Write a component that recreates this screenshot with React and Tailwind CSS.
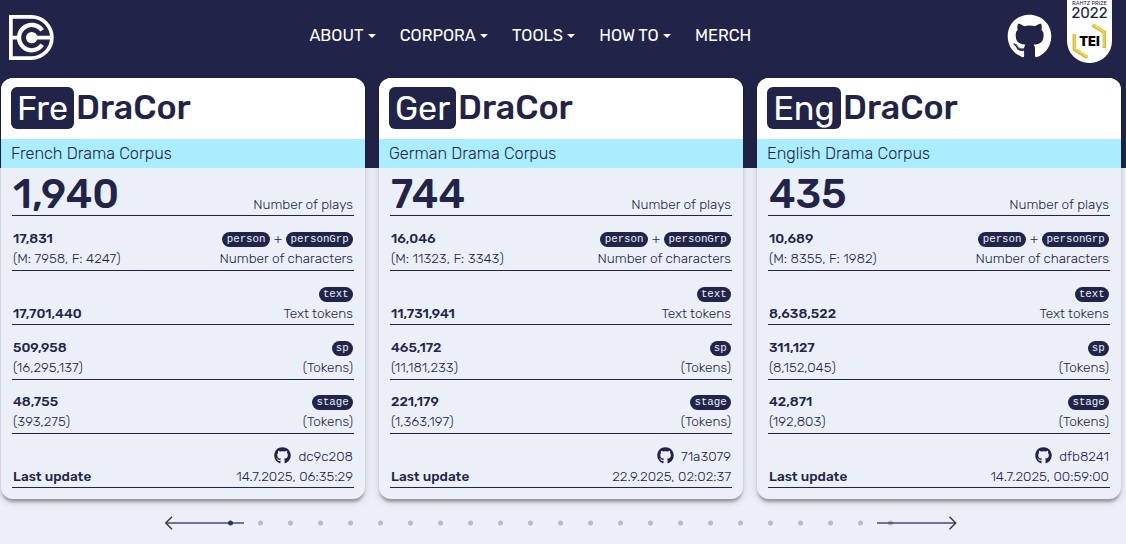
import { FaGithub } from "react-icons/fa";

const cards = [
  { id: "Fre", name: "French", plays: "1,940", chars: "17,831", mf: "(M: 7958, F: 4247)", text: "17,701,440", sp: "509,958", spt: "(16,295,137)", st: "48,755", stt: "(393,275)", sha: "dc9c208", date: "14.7.2025, 06:35:29", box: "w-[63px]" },
  { id: "Ger", name: "German", plays: "744", chars: "16,046", mf: "(M: 11323, F: 3343)", text: "11,731,941", sp: "465,172", spt: "(11,181,233)", st: "221,179", stt: "(1,363,197)", sha: "71a3079", date: "22.9.2025, 02:02:37", box: "w-[67px]" },
  { id: "Eng", name: "English", plays: "435", chars: "10,689", mf: "(M: 8355, F: 1982)", text: "8,638,522", sp: "311,127", spt: "(8,152,045)", st: "42,871", stt: "(192,803)", sha: "dfb8241", date: "14.7.2025, 00:59:00", box: "w-[74px]" },
];

function Logo() {
  return (
    <svg className="h-[46px] w-[46px]" viewBox="0 0 46 46" fill="none" stroke="#fff" strokeWidth="3.7">
      <path d="M1.9 1.9H22.3A20.6 20.6 0 0 1 22.3 43.1H1.9Z" />
      <path d="M33.2 15.4A12.7 12.7 0 1 0 33.2 29.8" strokeWidth="4.3" />
      <path d="M0 22.6H10M22.7 22.6H44" />
      <circle cx="22.7" cy="22.6" r="5.7" fill="#fff" stroke="none" />
    </svg>
  );
}

function Badge() {
  return (
    <div className="relative flex h-[63px] w-[45px] flex-col items-center overflow-hidden rounded-b-[22px] bg-white text-[#212448]">
      <span className="mt-[-1px] text-[5.6px] leading-[8px] whitespace-nowrap">RAHTZ PRIZE</span>
      <span className="text-[15px] leading-[13px]">2022</span>
      <svg className="absolute top-0 left-0 h-[63px] w-[45px]" viewBox="0 0 45 63" fill="none" strokeWidth="3.4" strokeLinejoin="round">
        <path d="M25.5 25L37.3 32.3V48M7.3 34V49.5L20.5 57.5" stroke="#d9b52c" />
        <path d="M25.5 24.6L37 31.8V47M7.6 34V49L20.5 56.8" stroke="#f0da5c" strokeWidth="1.4" />
      </svg>
      <span className="absolute top-[34px] font-[Inter,sans-serif] text-[12.8px] leading-4 font-black text-black">TEI</span>
    </div>
  );
}

function Row({ top, bottom, right, rightBottom }) {
  return (
    <div className="flex h-[54.4px] items-end justify-between border-b border-[#212448] px-px pb-[1.5px] text-[13.6px] leading-5">
      <div>
        <div className="font-medium">{top}</div>
        {bottom && <div className="font-light">{bottom}</div>}
      </div>
      <div className="flex flex-col items-end font-light">
        <div className="flex h-5 items-center gap-1">{right}</div>
        <div>{rightBottom}</div>
      </div>
    </div>
  );
}

function Tag({ children }) {
  return <span className="mt-[3px] h-[15px] rounded-full bg-[#212448] px-[4.2px] font-['Liberation_Mono',monospace] text-[10.8px] leading-[14px] font-normal text-[#ebeff7]">{children}</span>;
}

function Card({ c }) {
  return (
    <article className="h-[421px] w-[364px] shrink-0 overflow-hidden rounded-[12px] bg-[#ebeff7] shadow-[0_4px_3px_-1px_rgba(0,0,0,0.3),0_2px_10px_rgba(0,0,0,0.15)]">
      <div className="flex h-[61px] items-start bg-white pt-[9px] pl-[10px] text-[34px]">
        <span className={`${c.box} h-[42px] rounded-[6px] bg-[#212448] text-center leading-[43px] font-normal text-white`}>{c.id}</span>
        <span className="ml-[2px] leading-[41px] font-medium">DraCor</span>
      </div>
      <div className="h-[29px] bg-[#a9edff] px-[10px] text-[16.32px] leading-[29px] font-light">{c.name} Drama Corpus</div>
      <div className="mr-[11px] ml-[11px]">
        <div className="flex h-[48.4px] items-end justify-between border-b border-[#212448] px-px">
          <span className="text-[40.8px] leading-[42px] font-medium">{c.plays}</span>
          <span className="text-[13.6px] leading-[21px] font-light">Number of plays</span>
        </div>
        <Row top={c.chars} bottom={c.mf} right={<><Tag>person</Tag>+<Tag>personGrp</Tag></>} rightBottom="Number of characters" />
        <Row top={c.text} right={<Tag>text</Tag>} rightBottom="Text tokens" />
        <Row top={c.sp} bottom={c.spt} right={<Tag>sp</Tag>} rightBottom="(Tokens)" />
        <Row top={c.st} bottom={c.stt} right={<Tag>stage</Tag>} rightBottom="(Tokens)" />
        <Row top="Last update" right={<><FaGithub className="mr-[3px] h-[17px] w-[17px]" />{c.sha}</>} rightBottom={c.date} />
      </div>
    </article>
  );
}

const nav = ["ABOUT", "CORPORA", "TOOLS", "HOW TO", "MERCH"];

export default function App() {
  return (
    <div className="h-[544px] overflow-hidden bg-[linear-gradient(#212448_168px,#ebeff7_168px)] font-[Rubik,Inter,sans-serif] text-[#212448]">
      <header className="flex h-[78px] items-start pr-[14px] pl-[9px]">
        <div className="w-[300.4px] pt-[15px]"><Logo /></div>
        <nav className="flex gap-6 pt-[26px] text-[16.4px] leading-5 text-white">
          {nav.map((n) => (
            <span key={n} className="flex items-center whitespace-nowrap">
              {n}
              {n !== "MERCH" && <span className="ml-[4.3px] border-x-4 border-t-4 border-x-transparent border-t-white" />}
            </span>
          ))}
        </nav>
        <div className="ml-auto flex gap-[15px]">
          <FaGithub className="mt-[14px] h-[45px] w-[45px] text-white" />
          <Badge />
        </div>
      </header>
      <main className="flex gap-[14px] pl-px">
        {cards.map((c) => <Card key={c.id} c={c} />)}
      </main>
      <svg className="block h-[45px] w-full" viewBox="0 0 1126 45" fill="none">
        <path d="M166 24H244M877 24H956" stroke="#6f7196" strokeWidth="2" />
        {Array.from({ length: 23 }, (_, i) => <circle key={i} cx={230.5 + i * 30} cy="24" r="2.5" fill={i ? "#212448" : "#2b2e52"} fillOpacity={i ? 0.26 : 0.95} />)}
        <path d="M172 17.8L165.8 24L172 30.2M949.5 17.8L955.7 24L949.5 30.2" stroke="#3c3c44" strokeWidth="1.5" />
      </svg>
    </div>
  );
}
